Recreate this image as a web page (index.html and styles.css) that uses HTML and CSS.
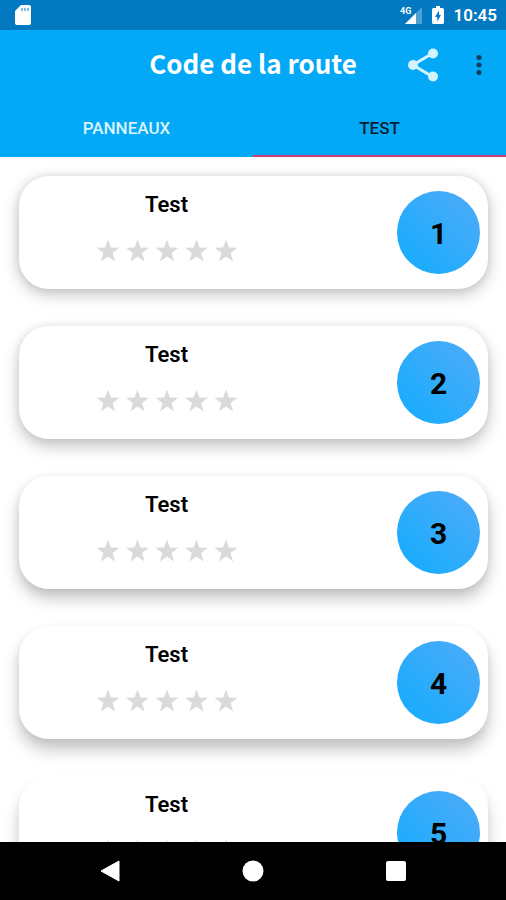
FILE: index.html
```html
<!DOCTYPE html>
<html lang="fr">
<head>
<meta charset="utf-8">
<meta name="viewport" content="width=device-width, initial-scale=1">
<title>Code de la route</title>
<link rel="stylesheet" href="styles.css">
</head>
<body>
<svg class="sprite" aria-hidden="true">
  <symbol id="stars" viewBox="0 0 142 24">
    <g id="star-shape">
      <path d="M12 0.500 L14.900 8.600 L23.500 8.800 L16.600 14.100 L19.100 22.400 L12 17.500 L4.900 22.400 L7.400 14.100 L0.500 8.800 L9.100 8.600 Z"/>
    </g>
    <use href="#star-shape" x="29.500"/>
    <use href="#star-shape" x="59"/>
    <use href="#star-shape" x="88.500"/>
    <use href="#star-shape" x="118"/>
  </symbol>
</svg>

<div class="status">
  <svg class="sd" viewBox="0 0 16 20" aria-hidden="true"><path fill="#fff" d="M6 0H14Q16 0 16 2V18Q16 20 14 20H2Q0 20 0 18V6Z"/><path stroke="#0279c0" stroke-width="1.500" d="M7 3v3M10 3v3M13 3v3" opacity=".65"/></svg>
  <div class="status-right">
    <svg class="signal" viewBox="0 0 22 19" aria-hidden="true"><path fill="#4f9fd0" d="M22 1V18H5Z"/><path fill="#fff" d="M16 7V18H5Z"/><text x="0" y="8">4G</text></svg>
    <svg class="battery" viewBox="0 0 12 18" aria-hidden="true"><path fill="#fff" d="M4 0h4v2h2.500Q12 2 12 3.500v13Q12 18 10.500 18h-9Q0 18 0 16.500v-13Q0 2 1.500 2H4Z"/><path fill="#0279c0" d="M7 4.500L3 11h2.300v4.500L9 9H7Z"/></svg>
    <span>10:45</span>
  </div>
</div>

<header class="header">
  <div class="bar">
    <h1>Code de la route</h1>
    <div class="actions">
      <button class="icon-button share" aria-label="Partager"><svg viewBox="0 0 30 34" aria-hidden="true"><path d="M25 5L5 17l20 12" fill="none" stroke="#d3f4ff" stroke-width="3"/><g fill="#d3f4ff"><circle cx="25" cy="5.500" r="5"/><circle cx="5" cy="17" r="5"/><circle cx="25" cy="28.500" r="5"/></g></svg></button>
      <button class="icon-button more" aria-label="Plus"><svg viewBox="0 0 6 20" aria-hidden="true"><g fill="#103f5c"><circle cx="3" cy="2.500" r="2.500"/><circle cx="3" cy="10" r="2.500"/><circle cx="3" cy="17.500" r="2.500"/></g></svg></button>
    </div>
  </div>
  <nav class="tabs">
    <a class="tab" href="#panneaux">PANNEAUX</a>
    <a class="tab active" href="#test" aria-current="page">TEST</a>
  </nav>
</header>

<main class="list">
  <a class="card depth-1" href="#test-1"><div class="info"><h2>Test</h2><svg class="stars" role="img" aria-label="0 / 5"><use href="#stars"/></svg></div><span class="number">1</span></a>
  <a class="card depth-2" href="#test-2"><div class="info"><h2>Test</h2><svg class="stars" role="img" aria-label="0 / 5"><use href="#stars"/></svg></div><span class="number">2</span></a>
  <a class="card depth-3" href="#test-3"><div class="info"><h2>Test</h2><svg class="stars" role="img" aria-label="0 / 5"><use href="#stars"/></svg></div><span class="number">3</span></a>
  <a class="card depth-4" href="#test-4"><div class="info"><h2>Test</h2><svg class="stars" role="img" aria-label="0 / 5"><use href="#stars"/></svg></div><span class="number">4</span></a>
  <a class="card depth-5" href="#test-5"><div class="info"><h2>Test</h2><svg class="stars" role="img" aria-label="0 / 5"><use href="#stars"/></svg></div><span class="number">5</span></a>
</main>

<footer class="nav">
  <button class="icon-button" aria-label="Retour"><svg viewBox="0 0 22 22" aria-hidden="true"><path fill="#fff" d="M20 1V21L2 11Z" stroke="#fff" stroke-linejoin="round"/></svg></button>
  <button class="icon-button" aria-label="Accueil"><svg viewBox="0 0 22 22" aria-hidden="true"><circle cx="11" cy="11" r="10.500" fill="#fff"/></svg></button>
  <button class="icon-button" aria-label="Récents"><svg viewBox="0 0 22 22" aria-hidden="true"><rect x="1" y="1" width="20" height="20" rx="2" fill="#fff"/></svg></button>
</footer>
</body>
</html>
```

FILE: styles.css
```css
* {
  box-sizing: border-box;
}

body {
  margin: 0;
  height: 100vh;
  display: flex;
  flex-direction: column;
  background: #fff;
  color: #000;
  font-family: Roboto, "Liberation Sans", sans-serif;
}

.sprite {
  display: none;
}

h1,
h2 {
  margin: 0;
}

a {
  color: inherit;
  text-decoration: none;
}

.status {
  flex: none;
  height: 30px;
  padding: 0 9px 0 15px;
  display: flex;
  align-items: center;
  justify-content: space-between;
  background: #0279c0;
  color: #fff;
  font-size: 17px;
  font-weight: 600;
}

.status-right {
  display: flex;
  align-items: center;
  gap: 10px;
}

.sd {
  width: 16px;
  height: 20px;
}

.signal {
  width: 22px;
  height: 19px;
}

.signal text {
  fill: #fff;
  font-size: 9px;
  font-weight: 700;
}

.battery {
  width: 12px;
  height: 18px;
}

.header {
  flex: none;
  background: #03a9f6;
}

.bar {
  height: 69px;
  display: grid;
  grid-template-columns: 1fr auto 1fr;
  align-items: center;
}

.bar h1 {
  grid-column: 2;
  padding-bottom: 4px;
  color: #fff;
  font: 700 26px/32px "Noto Sans CJK JP", "Noto Sans", sans-serif;
}

.actions {
  display: flex;
  justify-content: flex-end;
  align-items: center;
  gap: 38px;
  padding-right: 24px;
}

.icon-button {
  padding: 0;
  border: 0;
  background: none;
  display: flex;
}

.share svg {
  width: 30px;
  height: 34px;
}

.more svg {
  width: 6px;
  height: 20px;
}

.tabs {
  height: 58px;
  display: flex;
}

.tab {
  flex: 1;
  display: flex;
  align-items: center;
  justify-content: center;
  padding-top: 2px;
  border-bottom: 2px solid transparent;
  color: #d9f4ff;
  font-size: 17px;
  font-weight: 500;
}

.tab.active {
  color: #06212f;
  border-color: #d33b78;
}

.list {
  flex: 1;
  min-height: 0;
  overflow: hidden;
  padding: 19px 18px 0 19px;
  display: flex;
  flex-direction: column;
  gap: 37px;
}

.card {
  flex: none;
  padding: 15px 8px 15px 0;
  display: flex;
  justify-content: space-between;
  border-radius: 30px;
  background: #fff;
}

.depth-1 {
  box-shadow: 0 5px 16px rgba(0, 0, 0, .24), 0 0 8px rgba(0, 0, 0, .08);
}

.depth-2 {
  box-shadow: 0 7px 16px rgba(0, 0, 0, .24), 0 0 8px rgba(0, 0, 0, .06);
}

.depth-3 {
  box-shadow: 0 9px 16px rgba(0, 0, 0, .24), 0 2px 8px rgba(0, 0, 0, .06);
}

.depth-4 {
  box-shadow: 0 11px 16px rgba(0, 0, 0, .22), 0 3px 8px rgba(0, 0, 0, .06);
}

.depth-5 {
  box-shadow: 0 13px 16px rgba(0, 0, 0, .2), 0 4px 8px rgba(0, 0, 0, .04);
}

.info {
  width: 64%;
  display: flex;
  flex-direction: column;
  align-items: center;
  gap: 20px;
}

.info h2 {
  font-size: 22px;
  line-height: 28px;
  font-weight: 600;
}

.stars {
  width: 142px;
  height: 24px;
  fill: #dadada;
}

.number {
  width: 83px;
  height: 83px;
  padding-top: 2px;
  display: flex;
  align-items: center;
  justify-content: center;
  border-radius: 50%;
  background: linear-gradient(45deg, #12acfe, #50abf8);
  font-size: 30px;
  font-weight: 700;
}

.nav {
  flex: none;
  height: 58px;
  padding: 0 39px;
  display: flex;
  align-items: center;
  justify-content: space-around;
  background: #000;
}

.nav svg {
  width: 22px;
  height: 22px;
}
```
